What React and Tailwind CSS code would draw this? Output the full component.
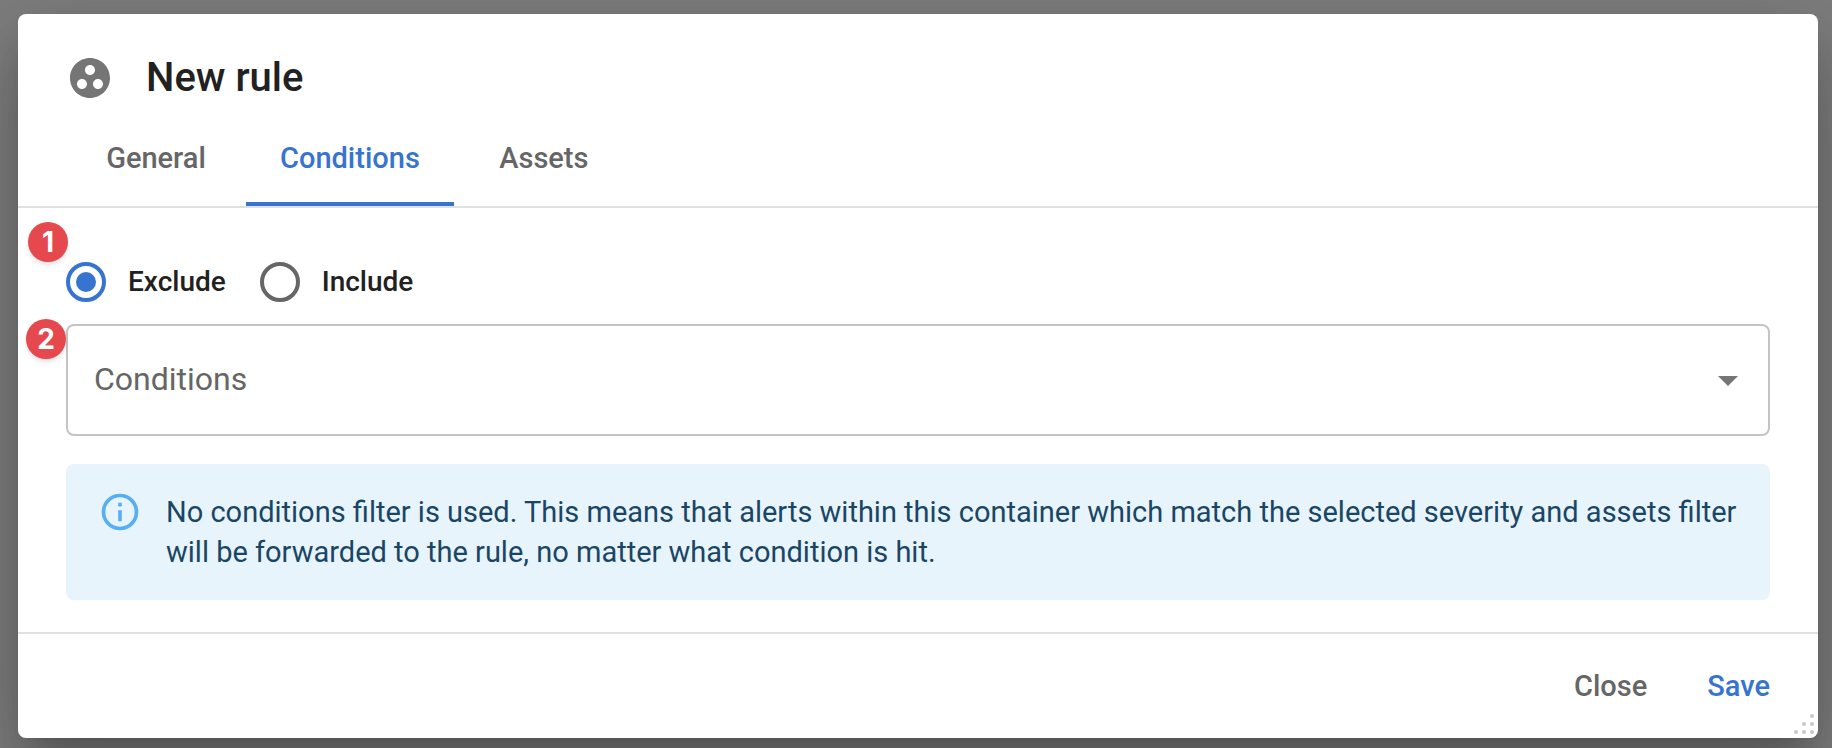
import { useState } from "react";

function GroupWorkIcon() {
  return (
    <svg viewBox="0 0 24 24" className="size-12 shrink-0 fill-[#757575]" aria-hidden="true">
      <path d="M12 2C6.48 2 2 6.48 2 12s4.48 10 10 10 10-4.480 10-10S17.520 2 12 2zM8 17.500c-1.380 0-2.500-1.120-2.500-2.500s1.120-2.500 2.500-2.500 2.500 1.120 2.500 2.500-1.120 2.500-2.500 2.500zM9.500 8c0-1.380 1.120-2.500 2.500-2.500s2.500 1.120 2.500 2.500-1.120 2.500-2.500 2.500S9.500 9.380 9.500 8zm6.500 9.500c-1.380 0-2.500-1.120-2.500-2.500s1.120-2.500 2.500-2.500 2.500 1.120 2.500 2.500-1.120 2.500-2.500 2.500z" />
    </svg>
  );
}

function InfoIcon() {
  return (
    <svg viewBox="0 0 24 24" className="size-11 shrink-0 fill-[#58aef2]" aria-hidden="true">
      <path d="M11,9H13V7H11M12,20C7.59,20 4,16.41 4,12C4,7.59 7.59,4 12,4C16.41,4 20,7.59 20,12C20,16.41 16.41,20 12,20M12,2A10,10 0 0,0 2,12A10,10 0 0,0 12,22A10,10 0 0,0 22,12A10,10 0 0,0 12,2M11,17H13V11H11V17Z" />
    </svg>
  );
}

function ResizeGrip() {
  return (
    <svg viewBox="0 0 20 20" className="absolute right-1 bottom-1 size-5 fill-[#c8c8c8]" aria-hidden="true">
      <circle cx="18" cy="2" r="2" />
      <circle cx="10" cy="10" r="2" />
      <circle cx="18" cy="10" r="2" />
      <circle cx="2" cy="18" r="2" />
      <circle cx="10" cy="18" r="2" />
      <circle cx="18" cy="18" r="2" />
    </svg>
  );
}

function Tab({ label, active, onClick }) {
  return (
    <button
      type="button"
      role="tab"
      aria-selected={active}
      onClick={onClick}
      className={
        "h-24 min-w-[180px] border-b-4 px-[34px] pt-1 text-[29px] leading-10 font-medium " +
        (active ? "border-[#3674cf] text-[#3674cf]" : "border-transparent text-[#666666]")
      }
    >
      {label}
    </button>
  );
}

function Radio({ label, checked, onChange }) {
  return (
    <label className="flex items-center gap-[22px] text-[28px] leading-10 font-medium text-[#212121]">
      <input
        type="radio"
        name="mode"
        checked={checked}
        onChange={onChange}
        className="grid size-10 appearance-none place-content-center rounded-full border-4 border-[#666666] before:size-5 before:rounded-full checked:border-[#3674cf] checked:before:bg-[#3674cf]"
      />
      {label}
    </label>
  );
}

function Badge({ children, className }) {
  return (
    <span
      className={
        "absolute flex size-10 items-center justify-center rounded-full bg-[#e5484d] font-[Inter,sans-serif] text-[28px] leading-10 font-bold text-white shadow-md " +
        className
      }
    >
      {children}
    </span>
  );
}

export default function App() {
  const [tab, setTab] = useState("Conditions");
  const [mode, setMode] = useState("Exclude");

  return (
    <div className="min-h-screen overflow-hidden bg-[#7e7e7f] pt-[14px] pr-[14px] pb-[10px] pl-[18px] font-[Roboto,sans-serif]">
      <div
        role="dialog"
        aria-labelledby="dialog-title"
        className="relative rounded-lg bg-white shadow-[0_22px_30px_-14px_rgba(0,0,0,0.2),0_48px_76px_6px_rgba(0,0,0,0.14),0_18px_92px_16px_rgba(0,0,0,0.12)]"
      >
        <header className="flex items-center gap-8 px-12 pt-10 pb-2">
          <GroupWorkIcon />
          <h1 id="dialog-title" className="text-[40px] leading-12 font-medium text-[#212121]">
            New rule
          </h1>
        </header>

        <div role="tablist" className="flex border-b-2 border-[#e0e0e0] px-12">
          {["General", "Conditions", "Assets"].map((name) => (
            <Tab key={name} label={name} active={tab === name} onClick={() => setTab(name)} />
          ))}
        </div>

        <main className="px-12 pt-[54px] pb-8">
          <div className="relative flex gap-[34px]">
            <Badge className="-top-10 -left-[38px]">1</Badge>
            {["Exclude", "Include"].map((name) => (
              <Radio key={name} label={name} checked={mode === name} onChange={() => setMode(name)} />
            ))}
          </div>

          <div className="relative mt-[22px] grid items-center">
            <Badge className="-top-[5px] -left-10">2</Badge>
            <select
              aria-label="Conditions"
              defaultValue=""
              className="col-start-1 row-start-1 h-28 w-full appearance-none rounded-lg border-2 border-[#c4c4c4] bg-white px-[26px] pb-0.5 text-[32px] leading-12 text-[#666666]"
            >
              <option value="">Conditions</option>
            </select>
            <svg
              viewBox="0 0 24 24"
              className="pointer-events-none col-start-1 row-start-1 mr-[18px] size-12 justify-self-end fill-[#757575]"
              aria-hidden="true"
            >
              <path d="M7 10l5 5 5-5z" />
            </svg>
          </div>

          <div role="status" className="mt-7 flex gap-6 rounded-lg bg-[#e8f4fc] px-8 py-7">
            <div className="flex h-10 items-center">
              <InfoIcon />
            </div>
            <p className="text-[29px] leading-10 text-[#1a4665]">
              No conditions filter is used. This means that alerts within this container which match the selected
              severity and assets filter will be forwarded to the rule, no matter what condition is hit.
            </p>
          </div>
        </main>

        <footer className="flex justify-end gap-[60px] border-t-2 border-[#e0e0e0] px-12 py-8 text-[29px] leading-10 font-medium">
          <button type="button" className="text-[#666666]">
            Close
          </button>
          <button type="button" className="text-[#3674cf]">
            Save
          </button>
        </footer>
        <ResizeGrip />
      </div>
    </div>
  );
}
